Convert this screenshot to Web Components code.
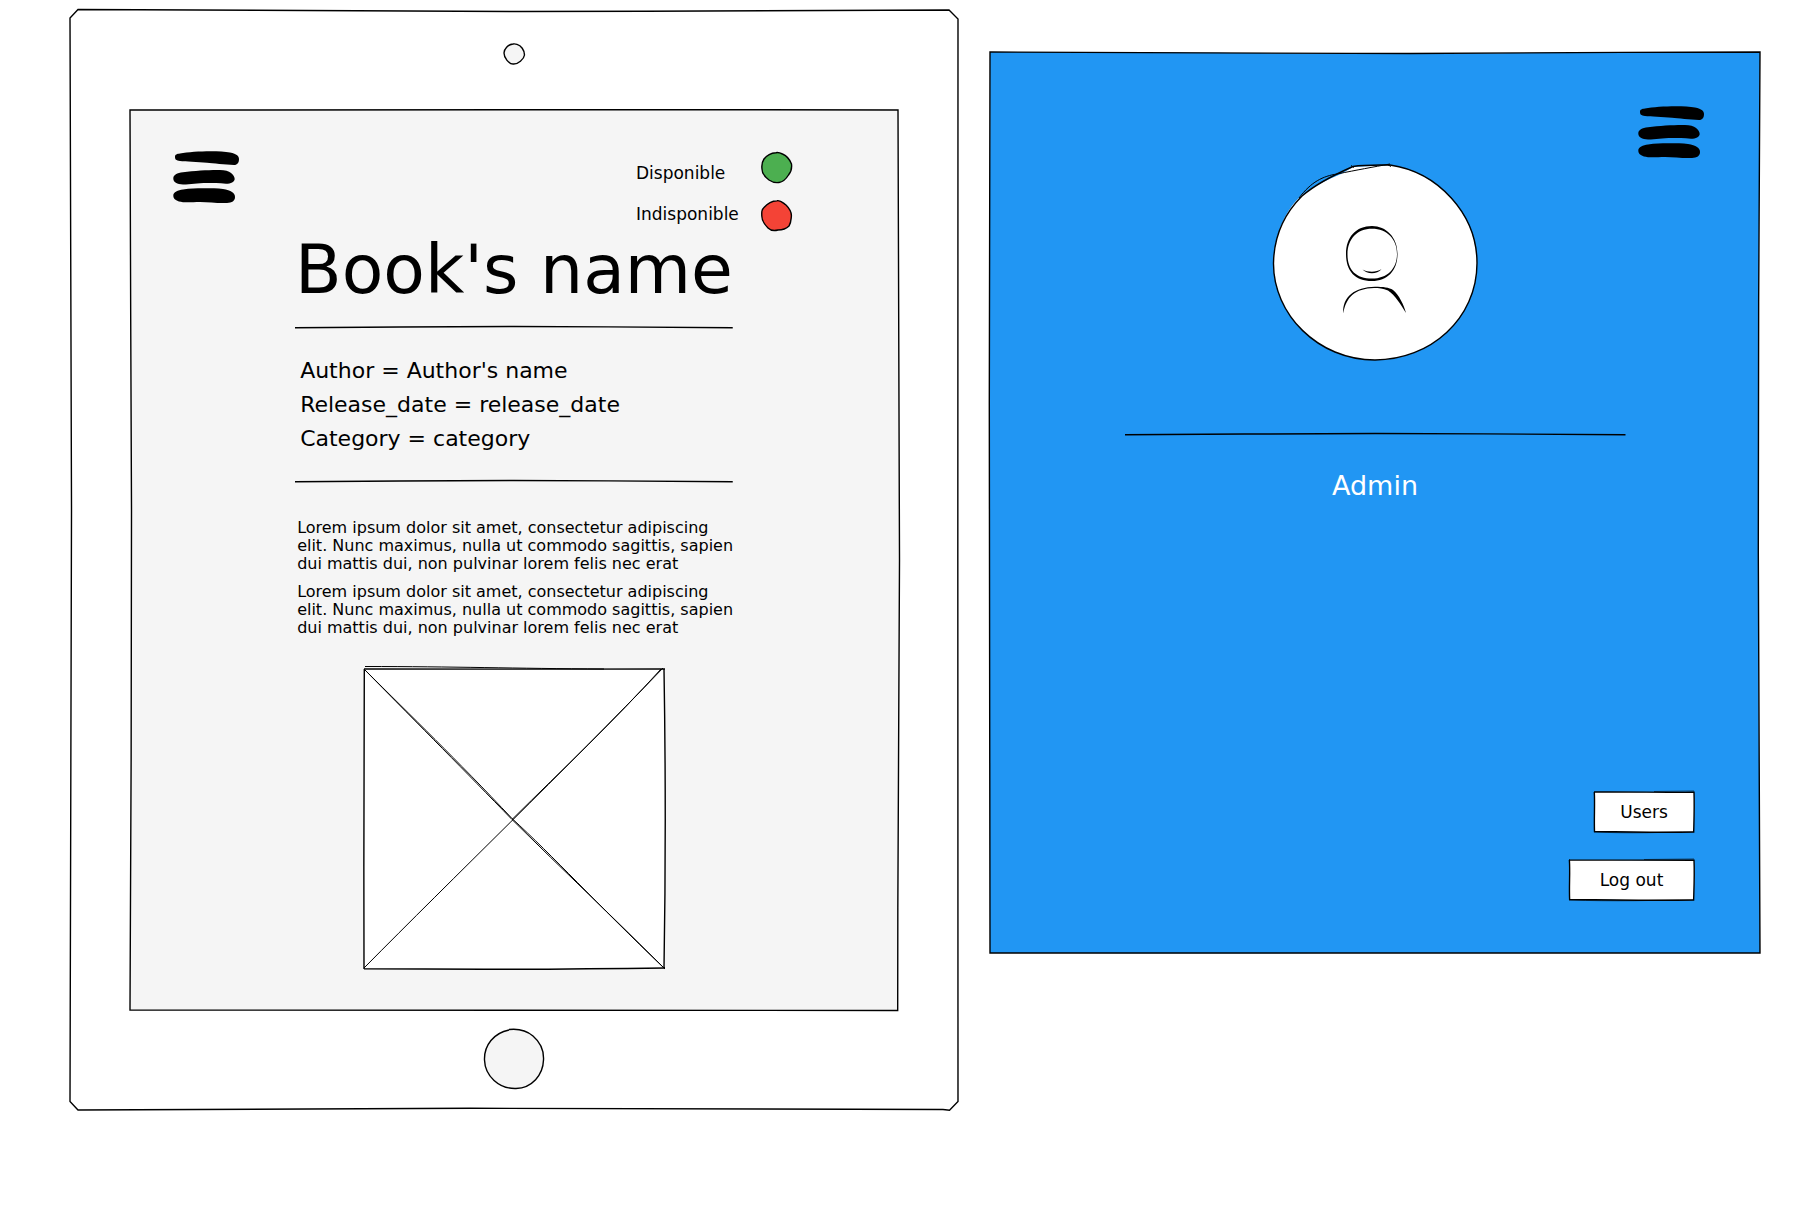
<!DOCTYPE html>
<html lang="en">
<head>
<meta charset="utf-8">
<title>Book's name</title>
<style>
  body { margin: 0; background: #fff; color: #000; font-family: "DejaVu Sans", sans-serif; }
  main { display: flex; align-items: flex-start; gap: 32px; padding: 10px 51px 40px 70px; }
  tablet-frame { flex: 888 1 0; }
  side-panel { flex: 770 1 0; margin-top: 42px; }
</style>
</head>
<body>
<main>
  <tablet-frame>
    <book-screen>
      <menu-button slot="menu"></menu-button>
      <status-legend slot="status"></status-legend>
      <span slot="title">Book's name</span>
      <book-fact slot="facts" name="Author">Author's name</book-fact>
      <book-fact slot="facts" name="Release_date">release_date</book-fact>
      <book-fact slot="facts" name="Category">category</book-fact>
      <book-text slot="text">Lorem ipsum dolor sit amet, consectetur adipiscing<br>elit. Nunc maximus, nulla ut commodo sagittis, sapien<br>dui mattis dui, non pulvinar lorem felis nec erat</book-text>
      <book-text slot="text">Lorem ipsum dolor sit amet, consectetur adipiscing<br>elit. Nunc maximus, nulla ut commodo sagittis, sapien<br>dui mattis dui, non pulvinar lorem felis nec erat</book-text>
      <image-placeholder slot="image"></image-placeholder>
    </book-screen>
  </tablet-frame>
  <side-panel>
    <menu-button slot="menu"></menu-button>
    <user-avatar slot="avatar"></user-avatar>
    <span slot="name">Admin</span>
    <sketch-button slot="actions">Users</sketch-button>
    <sketch-button slot="actions" wide>Log out</sketch-button>
  </side-panel>
</main>
<script>
  // Registers an element whose shadow root holds the given markup.
  const define = (name, html) => {
    const template = document.createElement('template');
    template.innerHTML = `<style>
      :host { display: block; }
      * { box-sizing: border-box; margin: 0; }
      svg { display: block; overflow: visible; fill: none; stroke: #000; stroke-width: 1.4; }
      .stack { display: grid; grid-template-columns: minmax(0, 1fr); }
      .stack > * { grid-area: 1 / 1; }
      .stack > svg { width: 100%; height: 100%; min-height: 0; contain: size; }
      .stack > svg * { vector-effect: non-scaling-stroke; }
      button { font: inherit; color: inherit; background: none; border: 0; padding: 0; cursor: pointer; }
    </style>` + html;
    customElements.define(name, class extends HTMLElement {
      constructor() {
        super();
        this.attachShadow({ mode: 'open' }).append(template.content.cloneNode(true));
        const label = this.shadowRoot.querySelector('[data-name]');
        if (label) label.textContent = this.getAttribute('name');
      }
    });
  };

  define('sketch-rule', `
    <style>svg { width: 100%; height: 8px; } path { vector-effect: non-scaling-stroke; }</style>
    <svg viewBox="0 0 438 8" preserveAspectRatio="none" aria-hidden="true">
      <path d="M0 4.8C70 4.4 150 3.500 219 3.500C290 3.500 370 4.4 438 4.8"/>
    </svg>`);

  define('menu-button', `
    <style>:host, button { display: block; } svg { width: 66px; height: 52px; fill: #000; stroke: none; }</style>
    <button type="button" aria-label="Menu">
      <svg viewBox="0 0 66 52" aria-hidden="true">
        <path d="M2 6C2 3.2 4 3 7 2.5C20 0 46 -.6 57 1.5C64 3 66 5 66 8C66 11.500 64.500 14 61 14C52 13.800 40 12.300 34 11.800C25 11 12 10.500 7 10C3 9.300 2 8.500 2 6Z"/>
        <path d="M.3 27.500C.3 24 4 22 10 21.300C22 19.500 38 18.800 47 19C57 19 61.700 24 61.700 28C61.500 31 58 32.700 53 32.800C46 32 40 32 34 32C24 32 18 33.500 10 33.500C4 33.300 .3 31 .3 27.500Z"/>
        <path d="M.3 44.500C.3 41 5 39.200 10 38.500C17 37.300 23 37.300 30 37.200C38 37.200 45 37.200 50 38C58 39.300 62 42 62 46C62 50 59 51.800 54 52C45 52.500 36 51 27 51C21 51 16 51.500 10 51.200C4 50.500 .3 48.500 .3 44.500Z"/>
      </svg>
    </button>`);

  define('status-legend', `
    <style>
      :host { display: flex; justify-content: space-between; width: 156px; }
      ul { list-style: none; padding: 2px 0 0; font-size: 17px; line-height: 41px; }
      .dots { display: grid; gap: 17px; align-content: start; padding-top: 1px; }
      svg { width: 31px; height: 31px; }
    </style>
    <ul><li>Disponible</li><li>Indisponible</li></ul>
    <div class="dots">
      <svg viewBox="0 0 31 31" aria-hidden="true"><path fill="#4caf50" d="M15 .7C10 1 6 3 3 7C1 10 .5 13 1 17C1 21 4 25 8 28C11 30 15 31 18 30.500C22 30 25 27 27.500 23C30 20 31 16 30.500 12C29 8 26 4 21.500 2C19 .8 17 .2 15 .7Z"/></svg>
      <svg viewBox="0 0 31 31" aria-hidden="true"><path fill="#f44336" d="M16 .7C11 1 7 3 3 7.500C1 9 .5 11 .8 15C.5 20 3 24 7 28C10 31 13 31 17 30C21 30 25 29 28 26C30 23 30 20 30.300 17C31 12 28 8 25 5C22 3 20 0 16 .7Z"/></svg>
    </div>`);

  define('book-fact', `
    <style>:host { font-size: 22px; line-height: 34px; }</style>
    <p><span data-name></span> = <slot></slot></p>`);

  define('book-text', `
    <style>:host { font-size: 16px; line-height: 18px; white-space: nowrap; }</style>
    <p><slot></slot></p>`);

  define('image-placeholder', `
    <style>svg { width: 300px; height: 300px; }</style>
    <svg viewBox="0 0 300 300" role="img" aria-label="Cover">
      <path fill="#fff" stroke="none" d="M0 0H300L301 150L300 300H0Z"/>
      <path d="M0 0C90 .8 200 0 301 0M300 0C301.500 90 301.500 210 300 300M301 299C200 300.500 90 300.500 0 299.800M0 300C-.5 200 .3 90 .3 0"/>
      <path stroke-width="1" d="M1 -2.500C90 -2.500 150 -.5 240 0"/>
      <path stroke-width="1" d="M0 0C60 61 100 101 148 150.500C200 202 250 249 301 300M0 0C50 50 90 88 148 149.500C190 188 230 232 301 300M0 299C90 208 200 102 299 -1M148 150.500C200 99 250 52 297 0"/>
    </svg>`);

  define('book-screen', `
    <style>
      header { display: flex; justify-content: space-between; height: 128px; padding: 41px 106px 0 43px; }
      .sheet { display: flex; flex-direction: column; width: 57%; margin: 0 auto; padding-bottom: 41px; }
      h1 { font-size: 68px; line-height: 64px; font-weight: 400; white-space: nowrap; display: flex; justify-content: center; }
      .title-rule { margin-top: 21px; }
      .facts { margin: 23px 5px 21px; }
      .text { display: grid; gap: 10px; margin: 34px 0 32px; padding: 0 2px; }
      .image { display: flex; justify-content: center; }
    </style>
    <div class="stack">
      <svg viewBox="0 0 768 900" preserveAspectRatio="none" aria-hidden="true">
        <path fill="#f5f5f5" d="M0 0C200 -.5 500 -.5 768 0C768 200 770 350 769.500 450C769 650 767.500 760 767.700 900.500C500 900 250 899 0 900C.5 750 2 550 1.500 400C1 250 .3 150 0 0Z"/>
      </svg>
      <div>
        <header><slot name="menu"></slot><slot name="status"></slot></header>
        <div class="sheet">
          <h1><slot name="title"></slot></h1>
          <sketch-rule class="title-rule"></sketch-rule>
          <div class="facts"><slot name="facts"></slot></div>
          <sketch-rule></sketch-rule>
          <div class="text"><slot name="text"></slot></div>
          <div class="image"><slot name="image"></slot></div>
        </div>
      </div>
    </div>`);

  define('tablet-frame', `
    <style>
      .body { padding: 0 60px; }
      .top { display: flex; justify-content: center; height: 100px; padding-top: 34px; }
      .bottom { display: flex; justify-content: center; height: 100px; padding-top: 19px; }
      .camera { width: 20px; height: 20px; }
      button, .home { width: 60px; height: 60px; }
    </style>
    <div class="stack">
      <svg viewBox="0 0 888 1100" preserveAspectRatio="none" aria-hidden="true">
        <path d="M8 -.5C200 .5 350 1.500 450 1.500C600 1.500 780 .3 879 0L888 9C887.500 300 888 800 888 1091.500L879.500 1100.300L873 1099.500C700 1098 550 1097.800 400 1098.300C250 1099 120 1100 8 1100L0 1091.500C0 900 1.500 700 1.500 500C1.500 300 0 150 0 8Z"/>
      </svg>
      <div class="body">
        <div class="top">
          <svg class="camera" viewBox="0 0 20 20" aria-hidden="true"><path fill="#f5f5f5" d="M9 0C4 .5 0 5 0 9C0 14 5 20 9 20C14 20.500 20 15 20.500 11C20.500 6 17 1.500 13 .3C12 0 10 -.3 9 0Z"/></svg>
        </div>
        <slot></slot>
        <div class="bottom">
          <button type="button" aria-label="Home">
            <svg class="home" viewBox="0 0 60 60" aria-hidden="true"><path fill="#f5f5f5" d="M25 .5C34 -.5 42 1 49 7C56 13 60 22 59.500 31C59 46 48 59 32 59.500C15 60 1 47 .5 31C0 16 10 4 25 1"/></svg>
          </button>
        </div>
      </div>
    </div>`);

  define('user-avatar', `
    <style>svg { width: 204px; height: 196px; }</style>
    <svg viewBox="0 0 204 196" role="img" aria-label="User">
      <path fill="#fff" stroke="none" d="M80 3L117 1C165 8 204 50 204 99C204 155 157 196 102 196C45 196 0 150 .5 99C1 72 12 46 29 31C40 22 54 16 68 10Z"/>
      <path d="M117 1C165 8 204 50 204 99C204 155 157 196 102 196C45 196 0 150 .5 99C1 72 12 49 29 32C44 19 63 10 80 2.500C92 .5 104 1 117 1"/>
      <path stroke-width="1" d="M26 34C38 18 50 12 64 10C84 6 100 3 117 0M78 1.500L81 3.500M114 .3L118 2.500"/>
      <g fill="#000" stroke="none">
        <path fill-rule="evenodd" d="M99 62C113 62 124.500 73 124.500 90C124.500 107 114 117 99 117C82 117 73 107 73 90C73 73 83 62 99 62ZM99 64.800C84 64.800 74.700 75 74.500 90C74.300 106 83 114.600 99 114.600C114 114.600 124 105 124 90C124 75 114 64.800 99 64.800Z"/>
        <path d="M89.500 105.500C95 108.500 103 108.500 108.500 105.300C104 110.500 94 110.500 89.500 105.500Z"/>
        <path d="M70.300 149.500C69 133 82 123 102 122.800C110 122.800 116 123.500 120 126C126 131 131 141 133 149C128 141 122 131 115 126.500C110 124.500 106 124 101 124C82 124.500 73 133 70.300 149.500Z"/>
      </g>
    </svg>`);

  define('sketch-button', `
    <style>
      :host { width: 100px; }
      :host([wide]) { width: 125px; }
      button { display: block; width: 100%; height: 40px; font-size: 17px; line-height: 40px; }
      .stack > svg { height: 40px; }
    </style>
    <div class="stack">
      <svg viewBox="0 0 100 40" preserveAspectRatio="none" aria-hidden="true">
        <path fill="#fff" d="M0 0C30 -.3 70 .5 100 .3C100.500 15 100 28 99.700 40C65 40.500 30 40 .5 39.500C0 25 1 12 .3 0Z"/>
        <path d="M60 -.5L100 -1M0 40C35 41.500 70 40.500 100 39.500" stroke-width=".6"/>
      </svg>
      <button type="button"><slot></slot></button>
    </div>`);

  define('side-panel', `
    <style>
      .menu { display: flex; justify-content: flex-end; padding: 54px 56px 0 0; }
      .avatar { display: flex; justify-content: center; padding-top: 6px; }
      sketch-rule { width: 65%; margin: 70px auto 29px; }
      h2 { font-size: 27px; line-height: 38px; font-weight: 400; text-align: center; color: #fff; }
      .actions { display: flex; flex-direction: column; align-items: flex-end; gap: 28px; padding: 287px 66px 53px 0; }
    </style>
    <div class="stack">
      <svg viewBox="0 0 770 901" preserveAspectRatio="none" aria-hidden="true">
        <path fill="#2196f3" d="M0 0C200 .5 300 1.500 420 1.500C550 1 650 0 770 0C769 150 768 350 768.300 500C768.500 650 769.500 780 770 901C500 901 250 901.500 0 901C0 700 -1 500 -.7 350C-.5 200 .5 100 0 0Z"/>
      </svg>
      <div>
        <div class="menu"><slot name="menu"></slot></div>
        <div class="avatar"><slot name="avatar"></slot></div>
        <sketch-rule></sketch-rule>
        <h2><slot name="name"></slot></h2>
        <div class="actions"><slot name="actions"></slot></div>
      </div>
    </div>`);
</script>
</body>
</html>
